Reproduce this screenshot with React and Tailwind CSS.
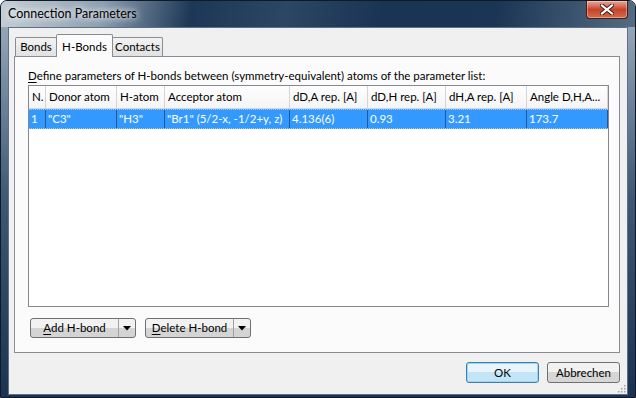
import React from "react";

const font = { fontFamily: "Lato, 'Noto Sans', sans-serif" };

function SplitButton({ label, underline }) {
  const rest = label.slice(1);
  return (
    <div className="flex h-[20px] w-[106px] rounded-[3px] border border-[#707070] bg-linear-to-b from-[#f2f2f2] from-50% to-[#d4d4d4] to-50% text-[11.5px] text-black">
      <div className="flex flex-1 items-center justify-center border-r border-[#a0a0a0] leading-none">
        <span className="underline underline-offset-2">{underline}</span>
        <span>{rest}</span>
      </div>
      <div className="flex w-[16px] items-center justify-center">
        <svg width="8" height="5" viewBox="0 0 8 5">
          <path d="M0 0 H8 L4 4.5 Z" fill="#000" />
        </svg>
      </div>
    </div>
  );
}

const cols = [
  { w: "w-[17px]", h: "N.", v: "1" },
  { w: "w-[71px]", h: "Donor atom", v: '"C3"' },
  { w: "w-[48px]", h: "H-atom", v: '"H3"' },
  { w: "w-[125px]", h: "Acceptor atom", v: '"Br1" (5/2-x, -1/2+y, z)' },
  { w: "w-[78px]", h: "dD,A rep. [A]", v: "4.136(6)" },
  { w: "w-[78px]", h: "dD,H rep. [A]", v: "0.93" },
  { w: "w-[81px]", h: "dH,A rep. [A]", v: "3.21" },
  { w: "w-[81px]", h: "Angle D,H,A...", v: "173.7" },
];

export default function App() {
  return (
    <div
      className="relative flex h-[398px] w-[636px] flex-col overflow-hidden rounded-t-[7px] border border-[#0e1a27] bg-linear-to-b from-[#a3b2c1] via-[#3d5873] to-[#1b3350]"
      style={font}
    >
      {/* title bar */}
      <div className="flex h-[26px] shrink-0 items-start justify-between bg-[linear-gradient(100deg,#c6ced6_0%,#8d9fb1_16%,#1d3856_30%,#2b4763_45%,#1a3453_60%,#1b3554_78%,#556c82_100%)]">
        <div className="flex h-[26px] items-center pl-[7px] text-[12.5px] text-black [text-shadow:0_0_6px_#ffffff,0_0_10px_#ffffff]">
          Connection Parameters
        </div>
        <div className="mr-[7px] flex h-[18px] w-[42px] items-center justify-center rounded-b-[4px] border border-t-0 border-[#4a1c12] bg-linear-to-b from-[#e7a798] via-[#c4442c] to-[#d96a4a] shadow-[inset_0_0_0_1px_rgba(255,255,255,0.35)]">
          <svg width="14" height="11" viewBox="0 0 14 11">
            <path d="M2 1.5 L12 9.5 M12 1.5 L2 9.5" stroke="#3a1a14" strokeWidth="4" strokeLinecap="square" />
            <path d="M2 1.5 L12 9.5 M12 1.5 L2 9.5" stroke="#ffffff" strokeWidth="2.2" strokeLinecap="square" />
          </svg>
        </div>
      </div>

      {/* client */}
      <div className="mx-[7px] mb-[8px] flex flex-1 flex-col border border-[#5d7088] bg-[#f0f0f0]">
        {/* tabs */}
        <div className="flex h-[28px] items-end pl-[6px] text-[11.5px] text-black">
          <div className="flex h-[19px] w-[42px] items-center justify-center rounded-t-[2px] border border-b-0 border-[#898c95] bg-linear-to-b from-[#f3f3f3] to-[#e1e1e1]">
            Bonds
          </div>
          <div className="relative z-10 -mb-px -ml-px flex h-[23px] w-[57px] items-start justify-center rounded-t-[2px] border border-b-0 border-[#898c95] bg-[#fbfbfb] pt-[3px]">
            H-Bonds
          </div>
          <div className="-ml-px flex h-[19px] w-[51px] items-center justify-center rounded-t-[2px] border border-b-0 border-[#898c95] bg-linear-to-b from-[#f3f3f3] to-[#e1e1e1]">
            Contacts
          </div>
        </div>

        {/* panel */}
        <div className="ml-[5px] mr-[7px] flex h-[297px] flex-col border border-[#898c95] bg-[#fbfbfb] pl-[13px]">
          <div className="mt-[11px] h-[15px] text-[11.5px] leading-[15px] text-black">
            <span className="underline underline-offset-2">D</span>efine parameters of H-bonds between (symmetry-equivalent) atoms of the parameter list:
          </div>
          <div className="mt-[2px] flex h-[222px] w-[581px] flex-col border border-[#828790] bg-white text-[11.5px]">
            <div className="flex h-[23px] border-b border-[#d5d5d5] bg-linear-to-b from-white to-[#f4f4f4] text-black">
              {cols.map((c, i) => (
                <div
                  key={i}
                  className={`${c.w} flex items-center overflow-hidden whitespace-nowrap border-r border-[#d5d5d5] pl-[3px]`}
                >
                  {c.h}
                </div>
              ))}
            </div>
            <div className="flex h-[20px] border-y border-dotted border-[#9cc8f2] bg-[#3399ff] text-white">
              {cols.map((c, i) => (
                <div
                  key={i}
                  className={`${c.w} flex items-center overflow-hidden whitespace-nowrap border-r border-[#1f5aa0] pl-[2px]`}
                >
                  {c.v}
                </div>
              ))}
            </div>
          </div>
          <div className="ml-[2px] mt-[11px] flex gap-[9px]">
            <SplitButton label="Add H-bond" underline="A" />
            <SplitButton label="Delete H-bond" underline="D" />
          </div>
        </div>

        {/* bottom buttons */}
        <div className="mr-[7px] mt-[9px] flex justify-end gap-[8px] text-[11.5px] text-black">
          <div className="flex h-[21px] w-[73px] items-center justify-center rounded-[3px] border border-[#3c7fb1] bg-linear-to-b from-[#e8f5fc] from-50% to-[#c4e5f6] to-50% shadow-[inset_0_0_0_1px_#9fd6f4]">
            OK
          </div>
          <div className="flex h-[21px] w-[73px] items-center justify-center rounded-[3px] border border-[#707070] bg-linear-to-b from-[#f2f2f2] from-50% to-[#d6d6d6] to-50%">
            Abbrechen
          </div>
        </div>
        <div className="flex flex-1 items-end justify-end pb-[1px] pr-[1px]">
          <svg width="10" height="10" viewBox="0 0 10 10">
            {[
              [8, 2],
              [5, 5],
              [8, 5],
              [2, 8],
              [5, 8],
              [8, 8],
            ].map(([x, y], i) => (
              <rect key={i} x={x} y={y} width="1.5" height="1.5" fill="#a0a0a0" />
            ))}
          </svg>
        </div>
      </div>
    </div>
  );
}
